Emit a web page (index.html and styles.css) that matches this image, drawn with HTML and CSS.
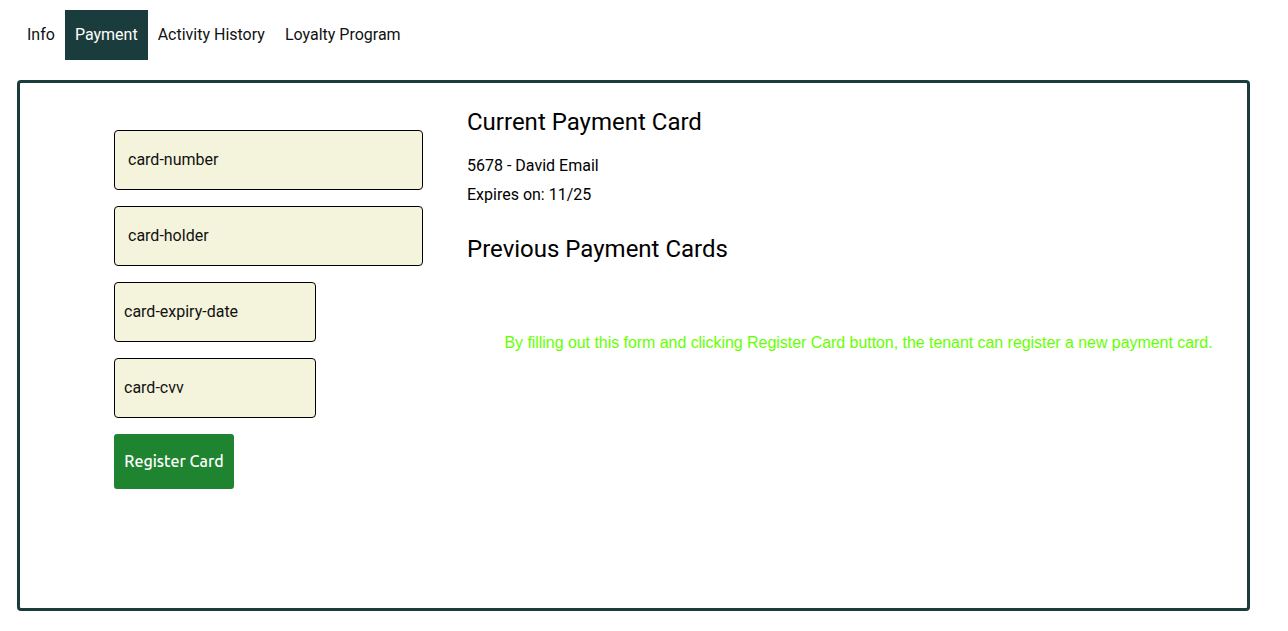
FILE: index.html
```html
<!DOCTYPE html>
<html>
<head>
<meta charset="utf-8">
<link rel="stylesheet" href="styles.css">
</head>
<body>
<nav class="tabs">
  <span class="tab">Info</span>
  <span class="tab active">Payment</span>
  <span class="tab">Activity History</span>
  <span class="tab">Loyalty Program</span>
</nav>
<main class="panel">
  <form class="card-form">
    <div class="field wide pad-l">card-number</div>
    <div class="field wide pad-l">card-holder</div>
    <div class="field narrow pad-s">card-expiry-date</div>
    <div class="field narrow pad-s">card-cvv</div>
    <button type="button" class="register">Register Card</button>
  </form>
  <section class="cards">
    <h3 class="heading">Current Payment Card</h3>
    <p class="line">5678 - David Email</p>
    <p class="line">Expires on: 11/25</p>
    <h3 class="heading prev">Previous Payment Cards</h3>
    <p class="hint">By filling out this form and clicking Register Card button, the tenant can register a new payment card.</p>
  </section>
</main>
</body>
</html>
```

FILE: styles.css
```css
* { box-sizing: border-box; }
body {
  margin: 0;
  padding: 10px 38px 0 17px;
  font-family: Roboto, "Liberation Sans", sans-serif;
  color: #000;
  background: #fff;
}
.tabs {
  display: flex;
  height: 50px;
}
.tab {
  display: flex;
  align-items: center;
  padding: 0 10px 2px 10px;
  font-size: 16px;
  color: #111;
}
.tab.active {
  background: #1b3c3c;
  color: #fff;
}
.panel {
  margin-top: 20px;
  height: 531px;
  border: 3px solid #1b3c3c;
  border-radius: 4px;
  display: flex;
  padding: 0 0 0 94px;
}
.card-form {
  width: 309px;
  margin: 47px 44px 0 0;
  display: flex;
  flex-direction: column;
  align-items: flex-start;
  gap: 16px;
}
.field {
  height: 60px;
  background: #f4f4dc;
  border: 1px solid #000;
  border-radius: 4px;
  display: flex;
  align-items: center;
  padding-bottom: 2px;
  font-size: 16px;
  color: #111;
}
.wide { width: 309px; }
.narrow { width: 202px; }
.pad-l { padding-left: 13px; }
.pad-s { padding-left: 9px; }
.register {
  height: 55px;
  width: 120px;
  border: none;
  border-radius: 3px;
  background: #1f842f;
  color: #fff;
  font-family: Ubuntu, "Open Sans", sans-serif;
  font-size: 16px;
  font-weight: 500;
  padding: 0 0 2px 0;
}
.cards {
  flex: 1;
}
.heading {
  margin: 24px 0 14px 0;
  font-size: 24px;
  font-weight: 400;
  line-height: 30px;
}
.line {
  margin: 0;
  font-size: 16px;
  line-height: 29px;
}
.heading.prev {
  margin-top: 25px;
}
.hint {
  margin: 70px 0 0 0;
  padding-left: 3px;
  text-align: center;
  font-family: "Liberation Sans", Arial, sans-serif;
  font-size: 16px;
  letter-spacing: -0.05px;
  color: #66ff00;
}
```
